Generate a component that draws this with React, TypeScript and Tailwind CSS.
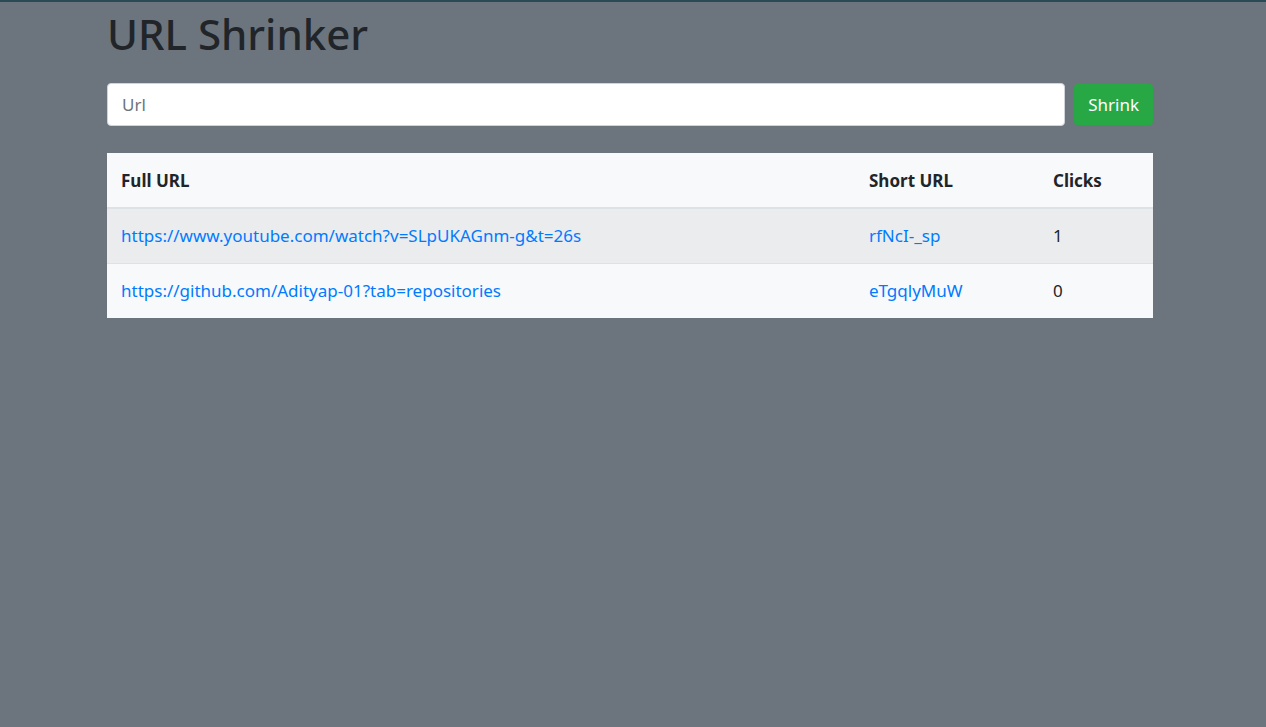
export default function App() {
  const rows = [
    { full: 'https://www.youtube.com/watch?v=SLpUKAGnm-g&t=26s', short: 'rfNcI-_sp', clicks: 1 },
    { full: 'https://github.com/Adityap-01?tab=repositories', short: 'eTgqlyMuW', clicks: 0 },
  ];

  return (
    <div
      className="min-h-[727px] bg-[#6c757d] border-t-2 border-[#2c4a55] text-[#212529]"
      style={{ fontFamily: '"Noto Sans", "Open Sans", sans-serif' }}
    >
      <div className="w-[1046px] ml-[107px]">
        {/* Title */}
        <h1 className="text-[42px] font-medium leading-[1.2] pt-[7px] mb-[24px]">URL Shrinker</h1>

        {/* Form */}
        <form className="flex items-center gap-[9px] mb-[27px]">
          <input
            placeholder="Url"
            className="flex-1 h-[43px] px-[14px] rounded-[4px] bg-white border border-[#ced4da] text-[17px] placeholder-[#6c757d] outline-none"
          />
          <button type="button" className="h-[41px] px-[14px] rounded-[4px] bg-[#28a745] text-white text-[17px]">
            Shrink
          </button>
        </form>

        {/* Table */}
        <table className="w-full bg-[#f8f9fa] text-[17px] border-collapse">
          <thead>
            <tr className="h-[55px] border-b-2 border-[#dee2e6]">
              <th className="text-left font-bold pl-[14px]">Full URL</th>
              <th className="text-left font-bold pl-[14px] w-[184px]">Short URL</th>
              <th className="text-left font-bold pl-[14px] w-[114px]">Clicks</th>
            </tr>
          </thead>
          <tbody>
            {rows.map((r, i) => (
              <tr key={r.short} className={`h-[55px] border-t border-[#dee2e6] ${i === 0 ? 'bg-[#ebecee]' : ''}`}>
                <td className="pl-[14px]">
                  <a href="#" className="text-[#007bff]">{r.full}</a>
                </td>
                <td className="pl-[14px]">
                  <a href="#" className="text-[#007bff]">{r.short}</a>
                </td>
                <td className="pl-[14px]">{r.clicks}</td>
              </tr>
            ))}
          </tbody>
        </table>
      </div>
    </div>
  );
}
